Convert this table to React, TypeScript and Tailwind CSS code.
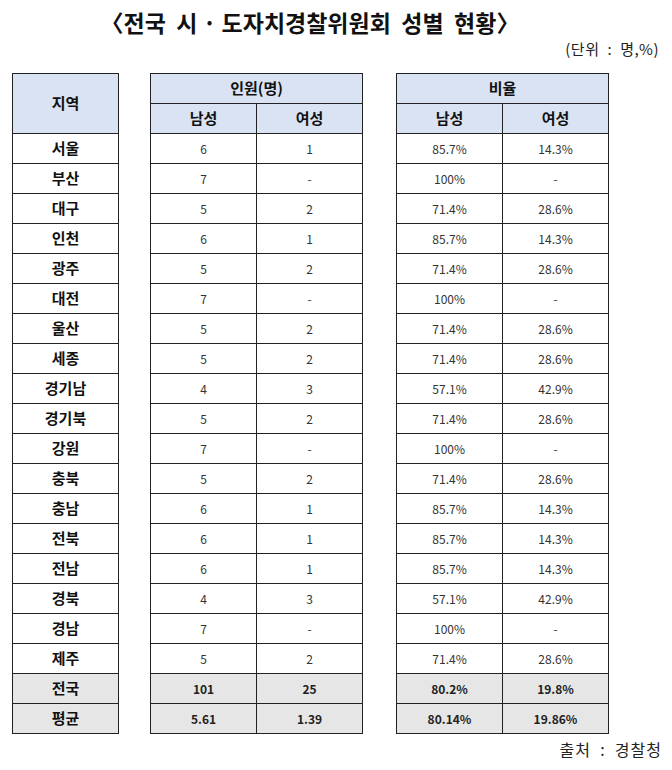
import React from "react";

const rows: [string, string, string, string, string][] = [
  ["서울", "6", "1", "85.7%", "14.3%"],
  ["부산", "7", "-", "100%", "-"],
  ["대구", "5", "2", "71.4%", "28.6%"],
  ["인천", "6", "1", "85.7%", "14.3%"],
  ["광주", "5", "2", "71.4%", "28.6%"],
  ["대전", "7", "-", "100%", "-"],
  ["울산", "5", "2", "71.4%", "28.6%"],
  ["세종", "5", "2", "71.4%", "28.6%"],
  ["경기남", "4", "3", "57.1%", "42.9%"],
  ["경기북", "5", "2", "71.4%", "28.6%"],
  ["강원", "7", "-", "100%", "-"],
  ["충북", "5", "2", "71.4%", "28.6%"],
  ["충남", "6", "1", "85.7%", "14.3%"],
  ["전북", "6", "1", "85.7%", "14.3%"],
  ["전남", "6", "1", "85.7%", "14.3%"],
  ["경북", "4", "3", "57.1%", "42.9%"],
  ["경남", "7", "-", "100%", "-"],
  ["제주", "5", "2", "71.4%", "28.6%"],
];

const totals: [string, string, string, string, string][] = [
  ["전국", "101", "25", "80.2%", "19.8%"],
  ["평균", "5.61", "1.39", "80.14%", "19.86%"],
];

const font = { fontFamily: '"Noto Sans CJK KR", "Noto Sans", sans-serif' };

const head = "border border-[#222] bg-[#dae3f3] text-[15px] font-bold text-[#111] text-center p-0";
const cell = "border border-[#222] h-[30px] text-center p-0";

function Table({ cols, title }: { cols: number[]; title: string }) {
  return (
    <table className="border-collapse table-fixed w-[213px]">
      <thead>
        <tr>
          <th colSpan={2} className={head + " h-[30px]"}>{title}</th>
        </tr>
        <tr>
          <th className={head + " h-[30px] w-[107px]"}>남성</th>
          <th className={head + " h-[30px]"}>여성</th>
        </tr>
      </thead>
      <tbody>
        {rows.map((r) => (
          <tr key={r[0]}>
            {cols.map((c) => (
              <td key={c} className={cell + " text-[12px] text-[#333]"}>{r[c]}</td>
            ))}
          </tr>
        ))}
        {totals.map((r) => (
          <tr key={r[0]} className="bg-[#e7e6e6]">
            {cols.map((c) => (
              <td key={c} className={cell + " text-[12px] font-bold text-[#222]"}>{r[c]}</td>
            ))}
          </tr>
        ))}
      </tbody>
    </table>
  );
}

export default function App() {
  return (
    <div className="w-[672px] h-[770px] bg-white relative" style={font}>
      <h1 className="pt-[6px] text-center text-[23px] font-bold text-[#111] leading-[33px] pr-[52px] whitespace-pre">
        {"〈전국  시 · 도자치경찰위원회  성별  현황〉"}
      </h1>
      <div className="flex justify-end pr-[13px] text-[15px] text-[#222] leading-[18px] mt-[1px] tracking-[0.5px] whitespace-pre">{"(단위\u2002:\u2002명,%)"}</div>

      <div className="flex items-start mt-[15px] pl-[12px]">
        <table className="border-collapse table-fixed w-[107px]">
          <thead>
            <tr>
              <th className={head + " h-[60px]"}>지역</th>
            </tr>
          </thead>
          <tbody>
            {rows.map((r) => (
              <tr key={r[0]}>
                <td className={cell + " text-[15px] font-bold text-[#111]"}>{r[0]}</td>
              </tr>
            ))}
            {totals.map((r) => (
              <tr key={r[0]} className="bg-[#e7e6e6]">
                <td className={cell + " text-[15px] font-bold text-[#111]"}>{r[0]}</td>
              </tr>
            ))}
          </tbody>
        </table>
        <div className="ml-[31px]">
          <Table cols={[1, 2]} title="인원(명)" />
        </div>
        <div className="ml-[33px]">
          <Table cols={[3, 4]} title="비율" />
        </div>
      </div>

      <div className="flex justify-end pr-[10px] mt-[4px] text-[16px] text-[#222] leading-[22px] tracking-[1px] whitespace-pre">{"출처  :  경찰청"}</div>
    </div>
  );
}
